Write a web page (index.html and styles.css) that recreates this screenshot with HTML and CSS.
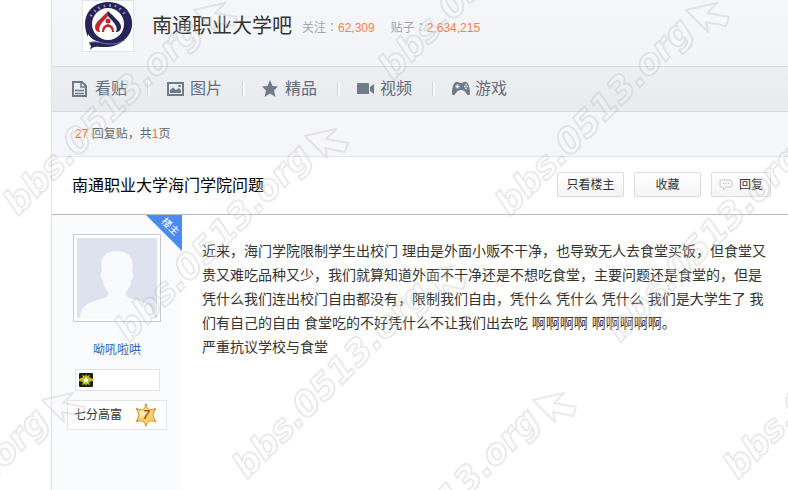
FILE: index.html
```html
<!DOCTYPE html>
<html lang="zh-CN">
<head>
<meta charset="utf-8">
<title>南通职业大学吧</title>
<link rel="stylesheet" href="styles.css">
</head>
<body>
<div class="page">
  <header class="forum-head">
    <svg class="logo" viewBox="0 0 50 50" aria-hidden="true">
      <path d="M5 36C-3 18 6 1 26 1C50 2 56 27 41 39C34 46 26 46 17 46C12 45 9 46 7 49L8 45L6 42C9 40 13 41 17 41C12 40 8 38 5 33Z" fill="#29235c"/>
      <circle cx="25" cy="23" r="16" fill="#fff"/>
      <path d="M6 42C13 39 19 43 27 43S37 41 42 39" fill="none" stroke="#7772a0" stroke-width="1"/>
      <path d="M7 14L9 15M11 9L13 11M15 6L17 8M21 4L22 6M27 3V6M33 4L32 6M38 7L36 9M42 11L40 13" stroke="#9a96ba" stroke-width="1.600"/>
      <path d="M25 10C20 16 12 21 12 26C12 29 14 31 17 31C14 25 21 20 25 15Z" fill="#c1272d"/>
      <path d="M25 10C31 16 38 21 38 26C38 29 36 31 33 31C36 25 29 20 25 15Z" fill="#29235c"/>
      <circle cx="25" cy="20" r="2.500" fill="#c1272d"/>
      <path d="M25 23C21 24 19 26 19 31H21C21 28 23 26 25 26Z" fill="#c1272d"/>
      <path d="M25 23C29 24 31 26 31 31H29C29 28 27 26 25 26Z" fill="#c1272d"/>
    </svg>
    <h1 class="forum-name">南通职业大学吧</h1>
    <p class="stats" lang="zh-TW"><span>关注：<b>62,309</b></span><span>贴子：<b>2,634,215</b></span></p>
  </header>

  <nav class="tabs">
    <a href="#posts"><svg viewBox="0 0 18 18"><path d="M1 2H10L14 6V16H1Z" fill="none" stroke="currentColor" stroke-width="2"/><path d="M9 2V7H14M3 10.500H12M3 13.500H12" fill="none" stroke="currentColor" stroke-width="1.500"/></svg>看贴</a>
    <a href="#pictures"><svg viewBox="0 0 18 18"><path d="M1 3H16V15H1Z" fill="none" stroke="currentColor" stroke-width="2"/><path d="M3 13V10L6 7.500L9 10L12 8L14 10V13Z" fill="currentColor"/><circle cx="12.500" cy="6" r="1.300" fill="currentColor"/></svg>图片</a>
    <a href="#best"><svg viewBox="0 0 18 18"><path d="M8 0L10.500 6L16 6.500L12 10.500L13.500 17L8 13.500L2.500 17L4 10.500L0 6.500L5.500 6Z" fill="currentColor"/></svg>精品</a>
    <a href="#video"><svg viewBox="0 0 18 18"><path d="M0 4Q0 3 1 3H11Q12 3 12 4V14H0ZM13 7L17 4V14L13 11Z" fill="currentColor"/></svg>视频</a>
    <a href="#games"><svg viewBox="0 0 18 18"><path d="M4 2C6 1 7 3 9 3S12 1 14 2C17 3 18 9 18 13C18 16 16 16 14 13C13 11 11 10 9 10S5 11 4 13C2 16 0 16 0 13C0 9 1 3 4 2Z" fill="currentColor"/><path d="M3.500 6.500H7.500M5.500 4.500V8.500" stroke="#eeeff3" stroke-width="1.500"/><path d="M12 6.500H13.500M14.500 6.500H16M13.300 4.500H14.700M13.300 8.500H14.700" stroke="#eeeff3" stroke-width="1.400"/></svg>游戏</a>
  </nav>

  <p class="summary"><b>27</b> 回复贴，共<b>1</b>页</p>

  <section class="thread-head">
    <h2>南通职业大学海门学院问题</h2>
    <div class="actions">
      <button type="button">只看楼主</button>
      <button type="button">收藏</button>
      <button type="button" class="reply"><svg viewBox="0 0 14 12" aria-hidden="true"><path d="M2 1H11Q13 1 13 3V6Q13 8 11 8H7L5 11L4 8H2Q1 8 1 7V2Q1 1 2 1Z" fill="#f8f8f8" stroke="#c8c8c8"/><path d="M4 4.500H5M6.500 4.500H7.500M9 4.500H10" stroke="#b5b5b5"/></svg>回复</button>
    </div>
  </section>

  <article class="post">
    <aside class="author">
      <span class="ribbon"><span>楼主</span></span>
      <svg class="avatar" viewBox="0 0 80 80" role="img" aria-label="头像"><path d="M0 0H80V80H0Z" fill="#dde2ee"/><path d="M3 80C4 68 10 65 20 62C28 60 32 59 31 54C27 49 26 46 26 42C23 40 23 36 25 33C22 20 28 13 40 13S58 20 55 33C57 36 57 40 54 42C54 46 53 49 49 54C48 59 52 60 60 62C70 65 76 68 77 80Z" fill="#f8fafc"/></svg>
      <a class="user" href="#user">呦吼啦哄</a>
      <div class="badges"><svg viewBox="0 0 14 14" aria-hidden="true"><rect width="14" height="14" rx="1" fill="#17230d"/><path d="M0 6L4 4L3 2L6 3L7 1L8 3L11 2L10 4L14 6V8L10 9L11 12L8 11L7 13L6 11L3 12L4 9L0 8Z" fill="#e9a719"/><circle cx="7" cy="7" r="3.800" fill="#98c91f"/><path d="M7 4L8 6H10L8.500 7.500L9 10L7 8.500L5 10L5.500 7.500L4 6H6Z" fill="#fff"/></svg></div>
      <div class="level"><span>七分高富</span><svg viewBox="0 0 22 24" role="img" aria-label="7"><path d="M11 3L14 7L20 6L18 12L20 18L14 18L11 22L8 18L2 18L4 12L2 6L8 7Z" fill="#f9cf70" stroke="#d7952b"/><path d="M5 8L11 6L16 8L5 16Z" fill="#fdebb5"/><g fill="#dda24b"><circle cx="11" cy="2" r="1.500"/><circle cx="2" cy="6" r="1.300"/><circle cx="20" cy="6" r="1.300"/><circle cx="2" cy="18" r="1.300"/><circle cx="20" cy="18" r="1.300"/><circle cx="11" cy="22" r="1.300"/></g><text x="8" y="16">7</text></svg></div>
    </aside>
    <div class="message">
      <p>近来，海门学院限制学生出校门 理由是外面小贩不干净，也导致无人去食堂买饭，但食堂又贵又难吃品种又少，我们就算知道外面不干净还是不想吃食堂，主要问题还是食堂的，但是凭什么我们连出校门自由都没有，限制我们自由，凭什么 凭什么 凭什么 我们是大学生了 我们有自己的自由 食堂吃的不好凭什么不让我们出去吃 啊啊啊啊 啊啊啊啊啊。</p>
      <p>严重抗议学校与食堂</p>
    </div>
  </article>
</div>

<svg class="watermark" aria-hidden="true">
  <defs>
    <g id="mark">
      <text transform="rotate(-45)">bbs.0513.org</text>
      <path d="M176 -207L207 -214L197 -204L219 -200L216 -191L196 -195L198 -185Z"/>
    </g>
  </defs>
  <use href="#mark" x="18" y="217"/>
  <use href="#mark" x="129" y="343"/>
  <use href="#mark" x="247" y="480"/>
  <use href="#mark" x="393" y="81"/>
  <use href="#mark" x="510" y="217"/>
  <use href="#mark" x="620" y="343"/>
  <use href="#mark" x="738" y="480"/>
  <use href="#mark" x="357" y="607"/>
  <use href="#mark" x="-134" y="607"/>
</svg>
</body>
</html>
```

FILE: styles.css
```css
* {
  box-sizing: border-box;
}

body {
  margin: 0;
  background: #fff;
  color: #333;
  font: 12px/24px "Liberation Sans", "Noto Sans CJK SC", sans-serif;
  overflow: hidden;
}

h1, h2, p {
  margin: 0;
  font-weight: normal;
}

b {
  font-weight: normal;
}

a {
  text-decoration: none;
}

.page {
  display: flex;
  flex-direction: column;
  min-height: 100vh;
  margin-left: 51px;
  border-left: 1px solid #e1e2e6;
}

.forum-head {
  display: flex;
  align-items: center;
  padding: 0 20px 14px 30px;
  background: linear-gradient(#f5f6fa, #f3f4f8);
}

.logo {
  width: 52px;
  height: 52px;
  border: 1px solid #e3e4e7;
  background: #fff;
}

.forum-name {
  margin: 0 10px 0 18px;
  font-size: 20px;
}

.stats {
  display: flex;
  gap: 16px;
  padding-top: 4px;
  color: #a4a5a9;
  font-family: "Liberation Sans", "Noto Sans CJK TC", sans-serif;
}

.stats b {
  color: #ff7f3e;
}

.tabs {
  display: flex;
  height: 46px;
  padding-left: 20px;
  align-items: center;
  border-top: 1px solid #d8dade;
  border-bottom: 1px solid #d8dade;
  background: linear-gradient(#eeeff3, #e9eaee);
}

.tabs a {
  display: flex;
  align-items: center;
  gap: 5px;
  width: 95px;
  color: #626c7c;
  font-size: 16px;
}

.tabs a:not(:last-child)::after {
  content: "";
  width: 2px;
  height: 14px;
  margin-left: 15px;
  border-left: 1px solid #d5d7dc;
  background: #f8f8fa;
}

.tabs svg {
  width: 18px;
  height: 18px;
  color: #6f7b8b;
}

.summary {
  padding: 10px 23px;
  border-bottom: 1px solid #e5e6eb;
  background: #f5f6fa;
  color: #666;
}

.summary b {
  color: #ff6a22;
}

.thread-head {
  display: flex;
  align-items: center;
  justify-content: space-between;
  height: 58px;
  padding: 0 17px 0 20px;
  border-bottom: 1px solid #b9babc;
}

.thread-head h2 {
  color: #000;
  font-size: 16px;
}

.actions {
  display: flex;
  gap: 10px;
  padding-bottom: 2px;
}

.actions button {
  width: 67px;
  height: 25px;
  padding: 0;
  border: 1px solid #dcdcdc;
  border-radius: 2px;
  background: linear-gradient(#fff, #f4f4f4);
  color: #333;
  font: inherit;
  line-height: 24px;
}

.actions .reply {
  display: flex;
  align-items: center;
  justify-content: center;
  gap: 6px;
  width: 60px;
}

.reply svg {
  width: 14px;
  height: 12px;
}

.post {
  display: flex;
  flex: 1;
}

.author {
  position: relative;
  display: flex;
  flex: 0 0 130px;
  flex-direction: column;
  align-items: center;
  padding-top: 19px;
  background: #fafbfd;
}

.ribbon {
  position: absolute;
  top: 0;
  right: 0;
  width: 36px;
  height: 36px;
  background: #4b8bf0;
  clip-path: polygon(0 0, 100% 0, 100% 100%);
  color: #fff;
}

.ribbon span {
  position: absolute;
  top: 0;
  right: 0;
  width: 24px;
  line-height: 24px;
  font-size: 10px;
  text-align: center;
  transform: rotate(45deg);
}

.avatar {
  width: 88px;
  height: 88px;
  padding: 3px;
  border: 1px solid #c8cacd;
  background: #fff;
}

.user {
  margin: 16px 0 7px;
  color: #2d64b3;
}

.badges {
  display: flex;
  align-items: center;
  width: 85px;
  height: 22px;
  padding-left: 3px;
  border: 1px solid #e3e4e6;
  background: #fff;
}

.badges svg {
  width: 14px;
  height: 14px;
}

.level {
  display: flex;
  align-items: center;
  justify-content: space-between;
  width: 100px;
  height: 30px;
  margin-top: 9px;
  padding: 0 9px 0 6px;
  border: 1px solid #e3e4e6;
  background: #fff;
}

.level svg {
  width: 22px;
  height: 24px;
}

.level text {
  fill: #b4561a;
  font: italic bold 12px "Liberation Sans", sans-serif;
}

.message {
  flex: 1;
  padding: 24px 20px;
  font-size: 14px;
}

.watermark {
  position: fixed;
  inset: 0;
  width: 100%;
  height: 100%;
  pointer-events: none;
  fill: rgba(255, 255, 255, 0.2);
  stroke: rgba(150, 150, 150, 0.2);
  stroke-width: 2;
  stroke-linejoin: round;
}

.watermark text {
  font: italic bold 35px "DejaVu Sans", sans-serif;
}
```
